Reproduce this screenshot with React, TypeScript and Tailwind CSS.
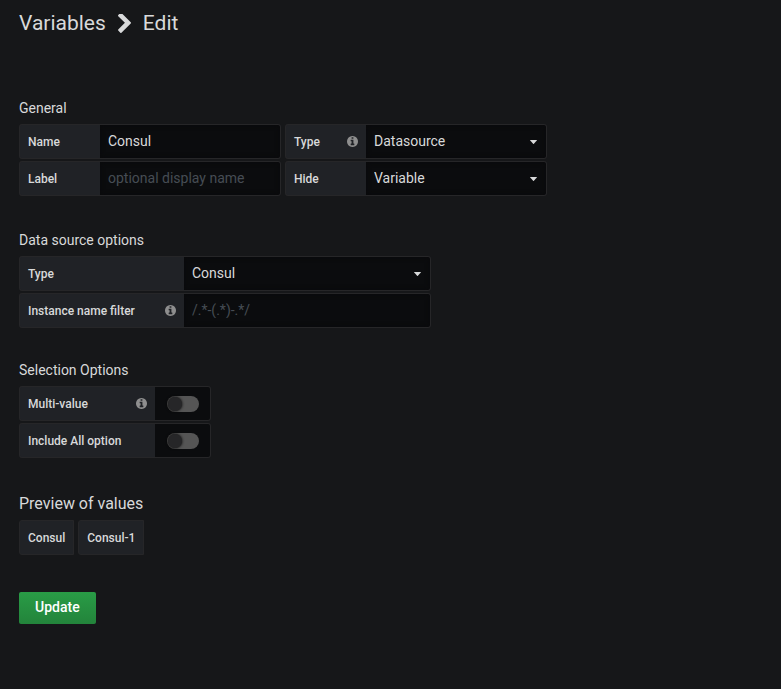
import { useId, useState } from "react";
import type { ReactNode } from "react";
import clsx from "clsx";

function ChevronIcon() {
  return (
    <svg aria-hidden="true" viewBox="346 133 1036 1505" className="h-[19px] w-[13px] fill-current">
      <path d="M1363 877l-742 742q-19 19-45 19t-45-19l-166-166q-19-19-19-45t19-45l531-531-531-531q-19-19-19-45t19-45l166-166q19-19 45-19t45 19l742 742q19 19 19 45t-19 45z" />
    </svg>
  );
}

function InfoIcon() {
  return (
    <svg aria-hidden="true" viewBox="128 128 1536 1536" className="size-[11px] fill-[#8e8e8e]">
      <path d="M1152 1376v-160q0-14-9-23t-23-9h-96v-512q0-14-9-23t-23-9h-320q-14 0-23 9t-9 23v160q0 14 9 23t23 9h96v320h-96q-14 0-23 9t-9 23v160q0 14 9 23t23 9h448q14 0 23-9t9-23zm-128-896v-160q0-14-9-23t-23-9h-192q-14 0-23 9t-9 23v160q0 14 9 23t23 9h192q14 0 23-9t9-23zm640 416q0 209-103 385.5t-279.5 279.5-385.5 103-385.5-103-279.5-279.5-103-385.5 103-385.5 279.5-279.5 385.5-103 385.5 103 279.5 279.5 103 385.5z" />
    </svg>
  );
}

const fieldStyle =
  "block h-[35px] w-full rounded-r-[3px] border border-l-0 border-[#262628] bg-[#0b0c0e] px-2 pb-[2px] text-sm text-[#d8d9da] shadow-[inset_0_0_5px_#09090b] outline-none focus:border-[#1f60c4]";

type FieldProps = {
  label: string;
  info?: boolean;
  labelWidth: string;
  controlWidth: string;
  children: (id: string) => ReactNode;
};

function Field({ label, info, labelWidth, controlWidth, children }: FieldProps) {
  const id = useId();
  return (
    <div className="flex">
      <label
        htmlFor={id}
        className={clsx(
          "flex h-[35px] shrink-0 items-center justify-between rounded-l-[3px] border border-r-0 border-[#262628] bg-[#202226] px-2 text-xs font-medium",
          labelWidth,
        )}
      >
        {label}
        {info && <InfoIcon />}
      </label>
      <div className={controlWidth}>{children(id)}</div>
    </div>
  );
}

function TextInput({ id, value, placeholder }: { id: string; value?: string; placeholder?: string }) {
  return (
    <input
      id={id}
      type="text"
      defaultValue={value}
      placeholder={placeholder}
      className={clsx(fieldStyle, "placeholder:text-[#464c54]")}
    />
  );
}

function Select({ id, options }: { id: string; options: string[] }) {
  return (
    <div className="relative">
      <select id={id} className={clsx(fieldStyle, "appearance-none")}>
        {options.map((option) => (
          <option key={option}>{option}</option>
        ))}
      </select>
      <svg
        aria-hidden="true"
        viewBox="0 0 7 4"
        className="pointer-events-none absolute top-4 right-[10px] h-1 w-[7px] fill-[#d8d9da]"
      >
        <path d="M.4 0h6.2q.6 0 .2.6L3.9 3.7q-.4.4-.8 0L.2.6Q-.2 0 .4 0z" />
      </svg>
    </div>
  );
}

function Switch({ id }: { id: string }) {
  const [on, setOn] = useState(false);
  return (
    <div className="flex h-[35px] items-center justify-center rounded-r-[3px] border border-l-0 border-[#262628] bg-[#0b0c0e]">
      <input
        id={id}
        type="checkbox"
        role="switch"
        checked={on}
        onChange={() => setOn(!on)}
        className="flex h-4 w-8 appearance-none items-center rounded-full bg-[#555555] px-px before:size-[14px] before:rounded-full before:bg-[#262628] before:shadow-[0_0_3px_#000000] checked:justify-end checked:bg-[#33a2e5]"
      />
    </div>
  );
}

function Section({ title, children }: { title: string; children: ReactNode }) {
  return (
    <section>
      <h2 className="mb-1.5 text-sm leading-5">{title}</h2>
      {children}
    </section>
  );
}

export default function App() {
  return (
    <main className="min-h-screen bg-[#161719] px-[19px] pt-2 pb-16 font-[Roboto,sans-serif] text-[#d8d9da]">
      <h1 className="flex items-center text-[21px] leading-[30px]">
        <a href="#variables">Variables</a>
        <span className="mx-3">
          <ChevronIcon />
        </span>
        Edit
      </h1>

      <form className="mt-[60px]" onSubmit={(event) => event.preventDefault()}>
        <Section title="General">
          <div className="flex flex-wrap gap-x-1 gap-y-0.5">
            <div className="flex flex-col gap-0.5">
              <Field label="Name" labelWidth="w-[81px]" controlWidth="w-[181px]">
                {(id) => <TextInput id={id} value="Consul" />}
              </Field>
              <Field label="Label" labelWidth="w-[81px]" controlWidth="w-[181px]">
                {(id) => <TextInput id={id} placeholder="optional display name" />}
              </Field>
            </div>
            <div className="flex flex-col gap-0.5">
              <Field label="Type" info labelWidth="w-[81px]" controlWidth="w-[181px]">
                {(id) => <Select id={id} options={["Datasource"]} />}
              </Field>
              <Field label="Hide" labelWidth="w-[81px]" controlWidth="w-[181px]">
                {(id) => <Select id={id} options={["Variable"]} />}
              </Field>
            </div>
          </div>
        </Section>

        <div className="mt-[34px]">
          <Section title="Data source options">
            <div className="flex flex-col gap-0.5">
              <Field label="Type" labelWidth="w-[165px]" controlWidth="w-[247px]">
                {(id) => <Select id={id} options={["Consul"]} />}
              </Field>
              <Field label="Instance name filter" info labelWidth="w-[165px]" controlWidth="w-[247px]">
                {(id) => <TextInput id={id} placeholder="/.*-(.*)-.*/" />}
              </Field>
            </div>
          </Section>
        </div>

        <div className="mt-8">
          <Section title="Selection Options">
            <div className="flex flex-col gap-0.5">
              <Field label="Multi-value" info labelWidth="w-[136px]" controlWidth="w-[56px]">
                {(id) => <Switch id={id} />}
              </Field>
              <Field label="Include All option" labelWidth="w-[136px]" controlWidth="w-[56px]">
                {(id) => <Switch id={id} />}
              </Field>
            </div>
          </Section>
        </div>

        <section className="mt-[34px]">
          <h2 className="mb-1 text-base leading-6">Preview of values</h2>
          <ul className="flex gap-1">
            {["Consul", "Consul-1"].map((value) => (
              <li
                key={value}
                className="flex h-[35px] items-center rounded-l-[3px] border border-[#262628] bg-[#202226] px-2 text-xs font-medium"
              >
                {value}
              </li>
            ))}
          </ul>
        </section>

        <button
          type="submit"
          className="mt-[37px] block h-8 rounded-xs bg-linear-to-b from-[#299c46] to-[#23843b] px-4 pb-0.5 text-sm font-medium text-white"
        >
          Update
        </button>
      </form>
    </main>
  );
}
